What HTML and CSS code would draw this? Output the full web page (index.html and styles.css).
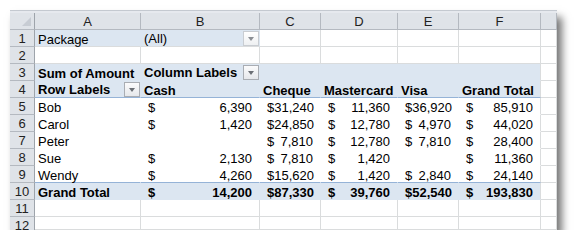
FILE: index.html
```html
<!DOCTYPE html>
<html lang="en">
<head>
    <meta charset="UTF-8">
    <title>Pivot Table - Amount by Package</title>
    <link rel="stylesheet" href="styles.css">
</head>
<body>
    <div class="sheet">
        <!-- top strip -->
        <div class="strip"></div>

        <!-- column headers -->
        <div class="corner"><span class="corner-tri"></span></div>
        <div class="ch">A</div>
        <div class="ch">B</div>
        <div class="ch">C</div>
        <div class="ch">D</div>
        <div class="ch">E</div>
        <div class="ch">F</div>
        <div class="ch"></div>

        <!-- row 1: page filter -->
        <div class="rh">1</div>
        <div class="c blue nosep">Package</div>
        <div class="c blue nosep split">(All)<span class="dd flat"></span></div>
        <div class="c"></div>
        <div class="c"></div>
        <div class="c"></div>
        <div class="c"></div>
        <div class="c"></div>

        <!-- row 2 -->
        <div class="rh">2</div>
        <div class="c"></div>
        <div class="c"></div>
        <div class="c"></div>
        <div class="c"></div>
        <div class="c"></div>
        <div class="c"></div>
        <div class="c"></div>

        <!-- row 3 -->
        <div class="rh">3</div>
        <div class="c blue b">Sum of Amount</div>
        <div class="c blue b split">Column Labels<span class="dd"></span></div>
        <div class="c blue"></div>
        <div class="c blue"></div>
        <div class="c blue"></div>
        <div class="c blue edge"></div>
        <div class="c"></div>

        <!-- row 4 -->
        <div class="rh">4</div>
        <div class="c blue b line-under split">Row Labels<span class="dd"></span></div>
        <div class="c blue b line-under">Cash</div>
        <div class="c blue b line-under">Cheque</div>
        <div class="c blue b line-under">Mastercard</div>
        <div class="c blue b line-under">Visa</div>
        <div class="c blue b line-under edge">Grand Total</div>
        <div class="c"></div>

        <!-- rows 5-9 -->
        <div class="rh">5</div>
        <div class="c pv">Bob</div>
        <div class="c pv acct"><span>$</span><span>6,390</span></div>
        <div class="c pv acct"><span>$</span><span>31,240</span></div>
        <div class="c pv acct"><span>$</span><span>11,360</span></div>
        <div class="c pv acct"><span>$</span><span>36,920</span></div>
        <div class="c pv acct edge"><span>$</span><span>85,910</span></div>
        <div class="c"></div>

        <div class="rh">6</div>
        <div class="c pv">Carol</div>
        <div class="c pv acct"><span>$</span><span>1,420</span></div>
        <div class="c pv acct"><span>$</span><span>24,850</span></div>
        <div class="c pv acct"><span>$</span><span>12,780</span></div>
        <div class="c pv acct"><span>$</span><span>4,970</span></div>
        <div class="c pv acct edge"><span>$</span><span>44,020</span></div>
        <div class="c"></div>

        <div class="rh">7</div>
        <div class="c pv">Peter</div>
        <div class="c pv"></div>
        <div class="c pv acct"><span>$</span><span>7,810</span></div>
        <div class="c pv acct"><span>$</span><span>12,780</span></div>
        <div class="c pv acct"><span>$</span><span>7,810</span></div>
        <div class="c pv acct edge"><span>$</span><span>28,400</span></div>
        <div class="c"></div>

        <div class="rh">8</div>
        <div class="c pv">Sue</div>
        <div class="c pv acct"><span>$</span><span>2,130</span></div>
        <div class="c pv acct"><span>$</span><span>7,810</span></div>
        <div class="c pv acct"><span>$</span><span>1,420</span></div>
        <div class="c pv"></div>
        <div class="c pv acct edge"><span>$</span><span>11,360</span></div>
        <div class="c"></div>

        <div class="rh">9</div>
        <div class="c pv line-under">Wendy</div>
        <div class="c pv acct line-under"><span>$</span><span>4,260</span></div>
        <div class="c pv acct line-under"><span>$</span><span>15,620</span></div>
        <div class="c pv acct line-under"><span>$</span><span>1,420</span></div>
        <div class="c pv acct line-under"><span>$</span><span>2,840</span></div>
        <div class="c pv acct line-under edge"><span>$</span><span>24,140</span></div>
        <div class="c"></div>

        <!-- row 10: totals -->
        <div class="rh">10</div>
        <div class="c blue b">Grand Total</div>
        <div class="c blue b acct"><span>$</span><span>14,200</span></div>
        <div class="c blue b acct"><span>$</span><span>87,330</span></div>
        <div class="c blue b acct"><span>$</span><span>39,760</span></div>
        <div class="c blue b acct"><span>$</span><span>52,540</span></div>
        <div class="c blue b acct edge"><span>$</span><span>193,830</span></div>
        <div class="c"></div>

        <!-- rows 11-12 -->
        <div class="rh">11</div>
        <div class="c"></div>
        <div class="c"></div>
        <div class="c"></div>
        <div class="c"></div>
        <div class="c"></div>
        <div class="c"></div>
        <div class="c"></div>

        <div class="rh rh-cut">12</div>
        <div class="c"></div>
        <div class="c"></div>
        <div class="c"></div>
        <div class="c"></div>
        <div class="c"></div>
        <div class="c"></div>
        <div class="c"></div>
    </div>
</body>
</html>
```

FILE: styles.css
```css
* {
    margin: 0;
    padding: 0;
    box-sizing: border-box;
}

body {
    background: #fff;
    font-family: 'Liberation Sans', Arial, sans-serif;
    font-size: 13px;
    color: #000;
}

.sheet {
    margin: 10px 0 0 10px;
    width: 547px;
    height: 220px;
    overflow: hidden;
    display: grid;
    grid-template-columns: 25px 106px 119px 61px 77px 61px 82px 16px;
    grid-template-rows: 3px repeat(12, 17px) 13px;
    background: #fff;
    box-shadow: 5px 7px 8px rgba(0, 0, 0, 0.55);
}

.strip {
    grid-column: 1 / -1;
    background: #e6e9ee;
    border-top: 1px solid #c4c9d0;
}

/* headers */
.corner,
.ch,
.rh {
    background: #dfe3e8;
    color: #222;
    border-right: 1px solid #b4b9c0;
    border-bottom: 1px solid #b4b9c0;
    line-height: 18px;
}

.ch {
    text-align: center;
}

.rh {
    text-align: center;
    border-right-color: #9ea4ab;
}

.rh-cut {
    border-bottom: none;
}

.corner {
    position: relative;
    border-right-color: #9ea4ab;
}

.corner-tri {
    position: absolute;
    right: 3px;
    bottom: 3px;
    width: 0;
    height: 0;
    border-left: 9px solid transparent;
    border-bottom: 9px solid #c7ccd3;
}

/* cells */
.c {
    border-right: 1px solid #dadcdd;
    border-bottom: 1px solid #dadcdd;
    padding: 0 3px;
    line-height: 19px;
    white-space: nowrap;
}

.b {
    font-weight: bold;
}

.blue {
    background: #dce6f1;
    border-color: #dce6f1;
}

.pv {
    border-color: #fff;
}

.blue.nosep {
    border-bottom-color: #dadcdd;
}

.c.split {
    display: flex;
    justify-content: space-between;
    align-items: center;
    padding-right: 0;
}

.c.line-under {
    border-bottom-color: #95b3d7;
}

.c.edge {
    border-right-color: #dadcdd;
}

.acct {
    display: flex;
    justify-content: space-between;
    padding: 0 7px 0 7px;
}

/* filter dropdown buttons */
.dd {
    position: relative;
    flex: none;
    width: 16px;
    height: 15px;
    border: 1px solid #a9adb3;
    background: linear-gradient(#fbfbfc, #e6e8eb);
}

.dd::after {
    content: "";
    position: absolute;
    left: 4px;
    top: 5px;
    border-left: 3.5px solid transparent;
    border-right: 3.5px solid transparent;
    border-top: 4px solid #6b6f75;
}

.dd.flat {
    border-color: #c9cdd2;
    background: linear-gradient(#ffffff, #eef0f2);
}

.dd.flat::after {
    border-top-color: #8a8e94;
}
```
